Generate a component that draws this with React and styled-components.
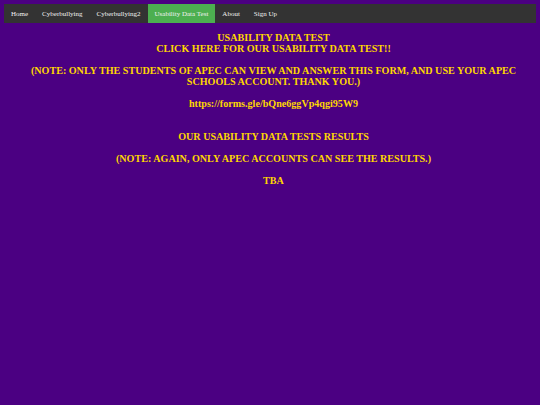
import React from "react";
import styled, { createGlobalStyle } from "styled-components";

const Global = createGlobalStyle`
  html, body { margin: 0; padding: 0; }
  body {
    margin: 4px;
    background: #4b0082;
    font-family: "Liberation Serif", "Times New Roman", serif;
  }
`;

const Nav = styled.ul`
  list-style: none;
  margin: 0;
  padding: 0;
  display: flex;
  background: #333333;
  height: 19px;
`;

const NavItem = styled.li`
  display: flex;
`;

const NavLink = styled.a`
  display: flex;
  align-items: center;
  padding: 0 7px;
  color: #f2f2f2;
  font-size: 7px;
  text-decoration: none;
  background: ${(p) => (p.$active ? "#4caf50" : "transparent")};
`;

const Content = styled.div`
  text-align: center;
  color: #ffd700;
  font-weight: bold;
  font-size: 10.1px;
  line-height: 11px;
  padding: 9px 0 0 7px;
`;

const Link = styled.a`
  color: #ffd700;
  text-decoration: none;
`;

const items = ["Home", "Cyberbullying", "Cyberbullying2", "Usability Data Test", "About", "Sign Up"];

export default function App() {
  return (
    <>
      <Global />
      <Nav>
        {items.map((t) => (
          <NavItem key={t}>
            <NavLink href="#" $active={t === "Usability Data Test"}>{t}</NavLink>
          </NavItem>
        ))}
      </Nav>
      <Content>
        USABILITY DATA TEST
        <br />
        CLICK HERE FOR OUR USABILITY DATA TEST!!
        <br />
        <br />
        (NOTE: ONLY THE STUDENTS OF APEC CAN VIEW AND ANSWER THIS FORM, AND USE YOUR APEC
        <br />
        SCHOOLS ACCOUNT. THANK YOU.)
        <br />
        <br />
        <Link href="#">https://forms.gle/bQne6ggVp4qgi95W9</Link>
        <br />
        <br />
        <br />
        OUR USABILITY DATA TESTS RESULTS
        <br />
        <br />
        (NOTE: AGAIN, ONLY APEC ACCOUNTS CAN SEE THE RESULTS.)
        <br />
        <br />
        TBA
      </Content>
    </>
  );
}
